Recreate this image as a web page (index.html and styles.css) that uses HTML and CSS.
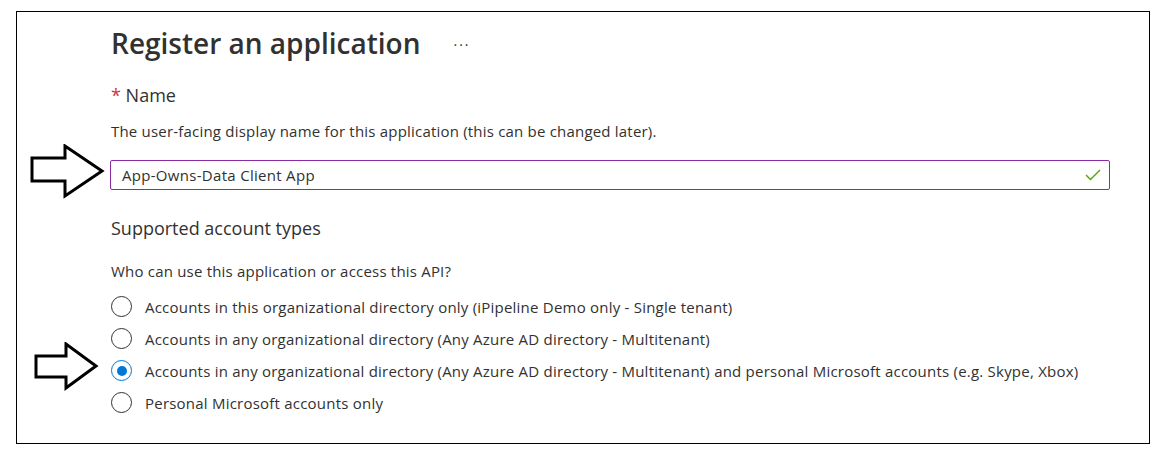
FILE: index.html
```html
<!DOCTYPE html>
<html lang="en">
<head>
<meta charset="utf-8">
<title>Register an application</title>
<link rel="stylesheet" href="styles.css">
</head>
<body>
<div class="frame">
  <div class="content">
    <div class="title-row">
      <h1 class="title">Register an application</h1>
      <span class="more">···</span>
    </div>

    <div class="label"><span class="req">*</span> Name</div>
    <p class="desc">The user-facing display name for this application (this can be changed later).</p>

    <div class="input-wrap">
      <svg class="arrow arrow-1" width="76" height="56" viewBox="0 0 76 56">
        <polygon points="2,14 35,14 35,2 72,27 35,52 35,37 2,37" fill="#fff" stroke="#000" stroke-width="3" stroke-linejoin="miter"/>
      </svg>
      <div class="input">
        <span class="input-text">App-Owns-Data Client App</span>
        <svg class="check" width="16" height="12" viewBox="0 0 16 12">
          <path d="M1 6 L5.5 10.5 L15 1" fill="none" stroke="#57a300" stroke-width="1.4"/>
        </svg>
      </div>
    </div>

    <h2 class="section">Supported account types</h2>
    <p class="desc question">Who can use this application or access this API?</p>

    <div class="radios">
      <div class="radio-row"><span class="radio"></span><span class="radio-label">Accounts in this organizational directory only (iPipeline Demo only - Single tenant)</span></div>
      <div class="radio-row"><span class="radio"></span><span class="radio-label">Accounts in any organizational directory (Any Azure AD directory - Multitenant)</span></div>
      <div class="radio-row selected">
        <svg class="arrow arrow-2" width="66" height="50" viewBox="0 0 66 50">
          <polygon points="2,14 32,14 32,2 62,24 32,46 32,35 2,35" fill="#fff" stroke="#000" stroke-width="3" stroke-linejoin="miter"/>
        </svg>
        <span class="radio checked"></span><span class="radio-label">Accounts in any organizational directory (Any Azure AD directory - Multitenant) and personal Microsoft accounts (e.g. Skype, Xbox)</span>
      </div>
      <div class="radio-row"><span class="radio"></span><span class="radio-label">Personal Microsoft accounts only</span></div>
    </div>
  </div>
</div>
</body>
</html>
```

FILE: styles.css
```css
* { box-sizing: border-box; }

html, body {
  margin: 0;
  padding: 0;
  background: #fff;
}

body {
  font-family: "Open Sans", "Noto Sans", sans-serif;
  color: #323130;
}

.frame {
  margin: 11px 0 0 16px;
  width: 1134px;
  height: 433px;
  border: 1px solid #000;
}

.content {
  padding: 12px 0 0 94px;
  display: flex;
  flex-direction: column;
}

.title-row {
  display: flex;
  align-items: center;
  height: 38px;
}

.title {
  margin: 0;
  font-size: 28px;
  font-weight: 600;
  line-height: 38px;
}

.more {
  margin-left: 33px;
  font-size: 14px;
  line-height: 1;
  letter-spacing: 2px;
  margin-top: 4px;
}

.label {
  margin-top: 21px;
  font-size: 18px;
  line-height: 24px;
}

.req {
  color: #d13438;
}

.desc {
  margin: 14px 0 0;
  font-size: 15px;
  line-height: 20px;
  letter-spacing: 0.2px;
}

.input-wrap {
  position: relative;
  margin-top: 19px;
}

.input {
  width: 1000px;
  height: 30px;
  margin-left: -1px;
  border: 1px solid #8a2da5;
  border-radius: 2px;
  display: flex;
  align-items: center;
  justify-content: space-between;
  padding: 0 8px 0 11px;
}

.input-text {
  font-size: 15px;
  letter-spacing: 0.3px;
}

.check {
  display: block;
}

.arrow {
  position: absolute;
  display: block;
}

.arrow-1 {
  left: -81px;
  top: -16px;
}

.arrow-2 {
  left: -77px;
  top: -18px;
}

.section {
  margin: 26px 0 0;
  font-size: 18px;
  font-weight: 400;
  line-height: 24px;
}

.question {
  margin-top: 21px;
}

.radios {
  margin-top: 15px;
  display: flex;
  flex-direction: column;
  gap: 11px;
}

.radio-row {
  position: relative;
  display: flex;
  align-items: center;
  height: 21px;
}

.radio {
  width: 21px;
  height: 21px;
  border: 1px solid #323130;
  border-radius: 50%;
  flex: none;
  display: flex;
  align-items: center;
  justify-content: center;
}

.radio.checked {
  border-color: #0078d4;
}

.radio.checked::after {
  content: "";
  width: 10px;
  height: 10px;
  border-radius: 50%;
  background: #0078d4;
}

.radio-label {
  margin-left: 13px;
  font-size: 15px;
  letter-spacing: 0.22px;
  line-height: 20px;
}
```
